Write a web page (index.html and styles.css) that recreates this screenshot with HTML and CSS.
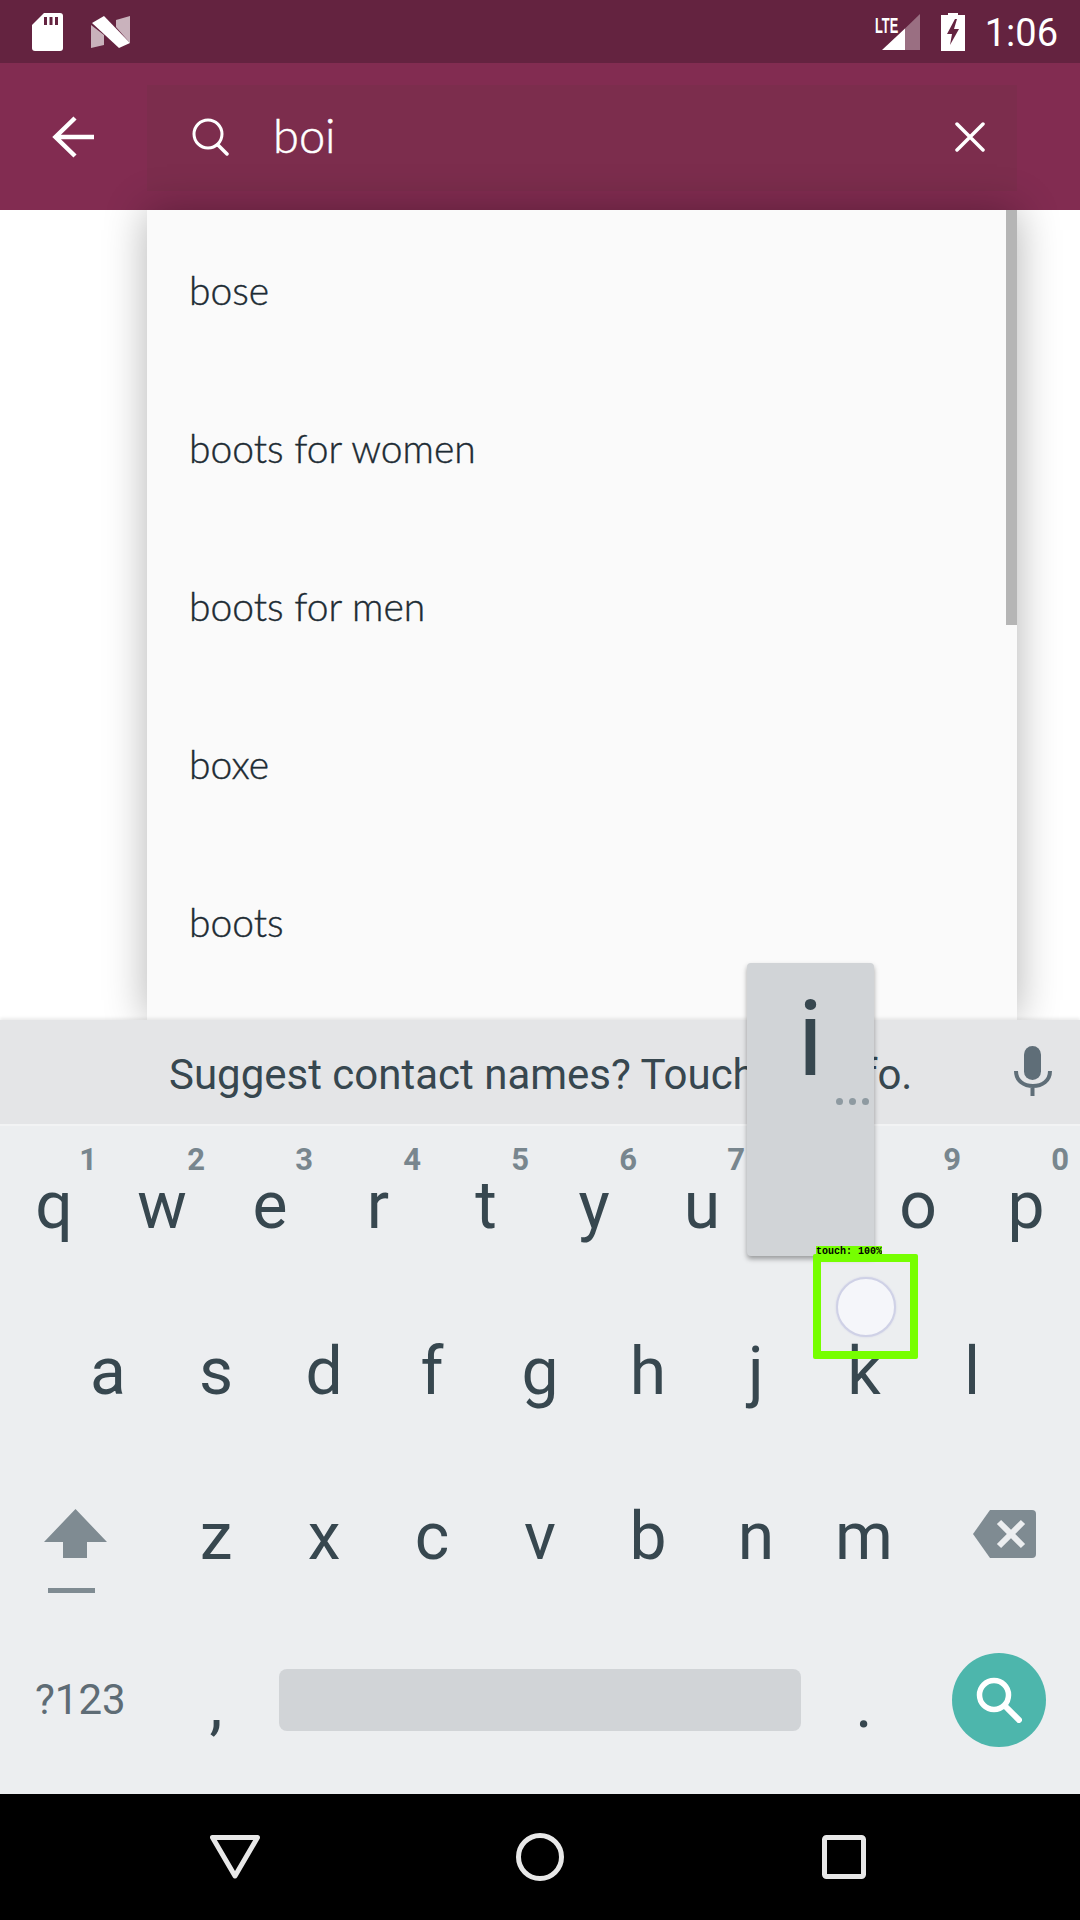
FILE: index.html
```html
<!DOCTYPE html>
<html lang="en">
<head>
<meta charset="utf-8">
<title>Search</title>
<link rel="stylesheet" href="styles.css">
</head>
<body>
<div class="screen">
  <header class="status">
    <div class="status-left">
      <svg class="ic-sd" viewBox="0 0 31 38"><path fill="#fff" d="M12 0h16a3 3 0 0 1 3 3v32a3 3 0 0 1-3 3H3a3 3 0 0 1-3-3V12z"/><path fill="#642340" d="M12 4h3v8h-3zM17.500 4h3v8h-3zM23 4h3v8h-3z"/></svg>
      <svg class="ic-n" viewBox="0 0 39 32"><path fill="#fff" fill-opacity=".65" d="M0 9l13 10v10L0 32zM25 11V4l14-4v27z"/><path fill="#fff" d="M1 7l12-7 26 27-11 5z"/></svg>
    </div>
    <div class="status-right">
      <svg class="ic-signal" viewBox="0 0 38 36"><path fill="#fff" fill-opacity=".35" d="M38 0v36H23V14.500z"/><path fill="#fff" d="M0 36L23 14.500V36z"/></svg>
      <span class="lte">LTE</span>
      <svg class="ic-batt" viewBox="0 0 24 38"><path fill="#fff" d="M7 0h10v2h7v36H0V2h7z"/><path fill="#642340" d="M14 6L6 21h5l-2 11 9-16h-5l3-10z"/></svg>
      <span class="time">1:06</span>
    </div>
  </header>

  <div class="toolbar">
    <svg class="ic-back" viewBox="0 0 42 42"><path fill="none" stroke="#fff" stroke-width="4.500" d="M42 21H4M23 2L3.500 21 23 40"/></svg>
    <div class="search-field">
      <svg class="ic-search" viewBox="0 0 38 38"><circle cx="16" cy="16" r="14" fill="none" stroke="#fff" stroke-width="3"/><path stroke="#fff" stroke-width="3.500" stroke-linecap="round" d="M26 27l9 9"/></svg>
      <span class="query">boi</span>
      <svg class="ic-clear" viewBox="0 0 30 30"><path stroke="#fff" stroke-width="3.500" stroke-linecap="round" d="M2 2l26 26M28 2L2 28"/></svg>
    </div>
  </div>

  <main class="content">
    <ul class="suggestions">
      <li>bose</li>
      <li>boots for women</li>
      <li>boots for men</li>
      <li>boxe</li>
      <li>boots</li>
    </ul>
    <div class="scrollbar"></div>
  </main>

  <section class="keyboard">
    <div class="strip">
      <span class="strip-text">Suggest contact names? Touch for info.</span>
      <svg class="ic-mic" viewBox="0 0 38 50"><rect x="10" y="0" width="17" height="34" rx="8.500" fill="#5f6e78"/><path fill="none" stroke="#5f6e78" stroke-width="4" d="M2 25c0 10 8 15 17 15s17-5 17-15M18.500 40v10"/></svg>
    </div>
    <div class="row row-top">
      <div class="key">q<sup>1</sup></div><div class="key">w<sup>2</sup></div><div class="key">e<sup>3</sup></div><div class="key">r<sup>4</sup></div><div class="key">t<sup>5</sup></div><div class="key">y<sup>6</sup></div><div class="key">u<sup>7</sup></div><div class="key">i<sup>8</sup></div><div class="key">o<sup>9</sup></div><div class="key">p<sup>0</sup></div>
    </div>
    <div class="row">
      <div class="key">a</div><div class="key">s</div><div class="key">d</div><div class="key">f</div><div class="key">g</div><div class="key">h</div><div class="key">j</div><div class="key">k</div><div class="key">l</div>
    </div>
    <div class="row row-low">
      <div class="key-shift">
        <svg class="ic-shift" viewBox="0 0 64 84"><path fill="#7f8b92" d="M31.500 0L63 33H43v16H19V33H0z"/><rect x="4" y="79" width="47" height="5" fill="#7f8b92"/></svg>
      </div>
      <div class="key">z</div><div class="key">x</div><div class="key">c</div><div class="key">v</div><div class="key">b</div><div class="key">n</div><div class="key">m</div>
      <div class="key-del">
        <svg class="ic-del" viewBox="0 0 63 48"><path fill="#7f8b92" d="M17 0h42a4 4 0 0 1 4 4v40a4 4 0 0 1-4 4H17L0 24z"/><path stroke="#eceef0" stroke-width="6" d="M26 12l24 24M50 12L26 36"/></svg>
      </div>
    </div>
    <div class="row row-bottom">
      <div class="key-sym">?123</div>
      <div class="key-punct">,</div>
      <div class="space"></div>
      <div class="key-punct">.</div>
      <div class="key-go">
        <div class="go-btn"><svg class="ic-go" viewBox="0 0 46 46"><circle cx="18" cy="18" r="14.500" fill="none" stroke="#fff" stroke-width="5.500"/><path stroke="#fff" stroke-width="6" d="M28 28l17 17"/></svg></div>
      </div>
    </div>
  </section>

  <nav class="navbar">
    <svg class="ic-nav-back" viewBox="0 0 50 44"><path fill="none" stroke="#e8e8e8" stroke-width="5" stroke-linejoin="round" d="M2.500 2.500h45L25 41z"/></svg>
    <svg class="ic-nav-home" viewBox="0 0 48 48"><circle cx="24" cy="24" r="21.500" fill="none" stroke="#e8e8e8" stroke-width="5"/></svg>
    <svg class="ic-nav-recent" viewBox="0 0 44 44"><rect x="2.500" y="2.500" width="39" height="39" rx="2" fill="none" stroke="#e8e8e8" stroke-width="5"/></svg>
  </nav>

  <div class="key-popup">
    <span class="popup-char">i</span>
    <span class="popup-more"><i></i><i></i><i></i></span>
  </div>

  <div class="touch-box">
    <span class="touch-label">touch: 100%</span>
    <span class="touch-dot"></span>
  </div>
</div>
</body>
</html>
```
FILE: styles.css
```css
* { box-sizing: border-box; }
html, body { margin: 0; padding: 0; }
body { width: 1080px; height: 1920px; overflow: hidden; font-family: Roboto, "Liberation Sans", sans-serif; }
.screen { position: relative; width: 1080px; height: 1920px; display: flex; flex-direction: column; background: #fff; overflow: hidden; }

.status { height: 63px; background: #642340; display: flex; justify-content: space-between; align-items: center; padding: 0 22px 0 32px; flex: none; }
.status-left { display: flex; align-items: center; gap: 28px; }
.status-right { display: flex; align-items: center; position: relative; }
.ic-sd { width: 31px; height: 38px; }
.ic-n { width: 39px; height: 32px; }
.ic-signal { width: 38px; height: 36px; margin-right: 21px; }
.lte { position: absolute; left: -7px; top: 7px; font: 700 22px/20px "Liberation Sans", sans-serif; color: #fff; transform: scaleX(.58); transform-origin: 0 0; }
.ic-batt { width: 24px; height: 38px; margin-right: 20px; }
.time { color: #fff; font-size: 38px; line-height: 42px; margin-top: 3px; }

.toolbar { height: 147px; background: #822c51; display: flex; align-items: center; padding: 0 63px 0 52px; flex: none; }
.ic-back { width: 42px; height: 42px; margin-right: 53px; flex: none; }
.search-field { flex: 1; height: 106px; margin-top: 3px; padding: 0 32px 3px 45px; background: #7c2d4d; display: flex; align-items: center; }
.ic-search { width: 38px; height: 38px; flex: none; }
.query { flex: 1; margin-left: 43px; margin-top: -4px; color: #fff; font: 300 47px/50px Lato, sans-serif; -webkit-text-stroke: .5px #fff; }
.ic-clear { width: 30px; height: 30px; flex: none; }

.content { flex: 1; position: relative; background: #fff; min-height: 0; }
.suggestions { list-style: none; margin: 0 0 0 147px; padding: 1px 0 0; width: 870px; height: 100%; background: #fafafa; box-shadow: 0 0 40px rgba(0,0,0,.3); overflow: hidden; }
.suggestions li { height: 158px; padding-left: 42px; display: flex; align-items: center; font: 300 39px/44px Lato, sans-serif; color: #1d2b33; -webkit-text-stroke: .4px #1d2b33; }
.scrollbar { position: absolute; left: 1006px; top: 0; width: 11px; height: 415px; background: #b5b5b5; }

.keyboard { height: 774px; flex: none; background: #eceef0; display: flex; flex-direction: column; position: relative; box-shadow: 0 -2px 3px rgba(0,0,0,.08); }
.strip { height: 106px; background: #e4e5e7; display: flex; align-items: center; padding: 0 28px 0 169px; border-bottom: 2px solid #f2f3f4; flex: none; }
.strip-text { flex: 1; font-size: 42px; line-height: 50px; color: #37474f; padding-top: 6px; }
.ic-mic { width: 38px; height: 50px; flex: none; margin-bottom: 2px; }

.row { display: flex; justify-content: center; height: 165px; flex: none; }
.row-top { height: 163px; padding-bottom: 3px; }
.key { position: relative; width: 108px; display: flex; align-items: center; justify-content: center; font-size: 66px; line-height: 80px; color: #37474f; }
.key sup { position: absolute; right: 11px; top: 15px; font-size: 31px; line-height: 38px; font-weight: 700; color: #78868e; }
.row-low { justify-content: flex-start; }
.key-shift { width: 162px; padding-left: 44px; display: flex; align-items: center; }
.key-del { margin-left: 55px; display: flex; align-items: center; }
.ic-shift { width: 64px; height: 84px; margin-top: 28px; }
.ic-del { width: 63px; height: 48px; margin-top: -6px; }

.row-bottom { height: 175px; align-items: center; justify-content: flex-start; padding-bottom: 14px; }
.key-sym { width: 162px; padding-left: 35px; font-size: 42px; color: #5e6c75; }
.key-punct { width: 108px; text-align: center; font-size: 66px; line-height: 80px; color: #37474f; margin-top: 10px; }
.space { width: 522px; height: 62px; background: #d1d4d7; border-radius: 8px; margin: 0 9px; }
.key-go { flex: 1; display: flex; justify-content: center; }
.go-btn { width: 94px; height: 94px; border-radius: 50%; background: #4db6ac; display: flex; align-items: center; justify-content: center; }
.ic-go { width: 46px; height: 46px; }

.navbar { height: 126px; background: #000; display: flex; align-items: center; padding-left: 210px; flex: none; }
.ic-nav-back { width: 50px; height: 44px; margin-right: 256px; }
.ic-nav-home { width: 48px; height: 48px; margin-right: 258px; }
.ic-nav-recent { width: 44px; height: 44px; }

.key-popup { position: absolute; left: 747px; top: 963px; width: 127px; height: 293px; background: #d1d4d7; border-radius: 4px; box-shadow: 0 3px 5px rgba(0,0,0,.35); }
.popup-char { position: absolute; left: 0; right: 0; top: 26px; text-align: center; font-size: 106px; line-height: 100px; color: #37474f; }
.popup-more { position: absolute; left: 89px; top: 135px; display: flex; gap: 6px; }
.popup-more i { width: 7px; height: 7px; border-radius: 50%; background: #8e9aa1; }

.touch-box { position: absolute; left: 813px; top: 1254px; width: 105px; height: 105px; border: 8px solid #76ff00; border-radius: 2px; }
.touch-label { position: absolute; left: -5px; top: -16px; width: 66px; height: 11px; background: #76ff00; color: #000; font: 700 10px/11px "Liberation Mono", monospace; white-space: nowrap; overflow: hidden; }
.touch-dot { position: absolute; left: 15px; top: 15px; width: 60px; height: 60px; border-radius: 50%; background: #f5f6fa; border: 2px solid #cfd1e6; box-shadow: 0 0 2px #cfd1e6; }
```
